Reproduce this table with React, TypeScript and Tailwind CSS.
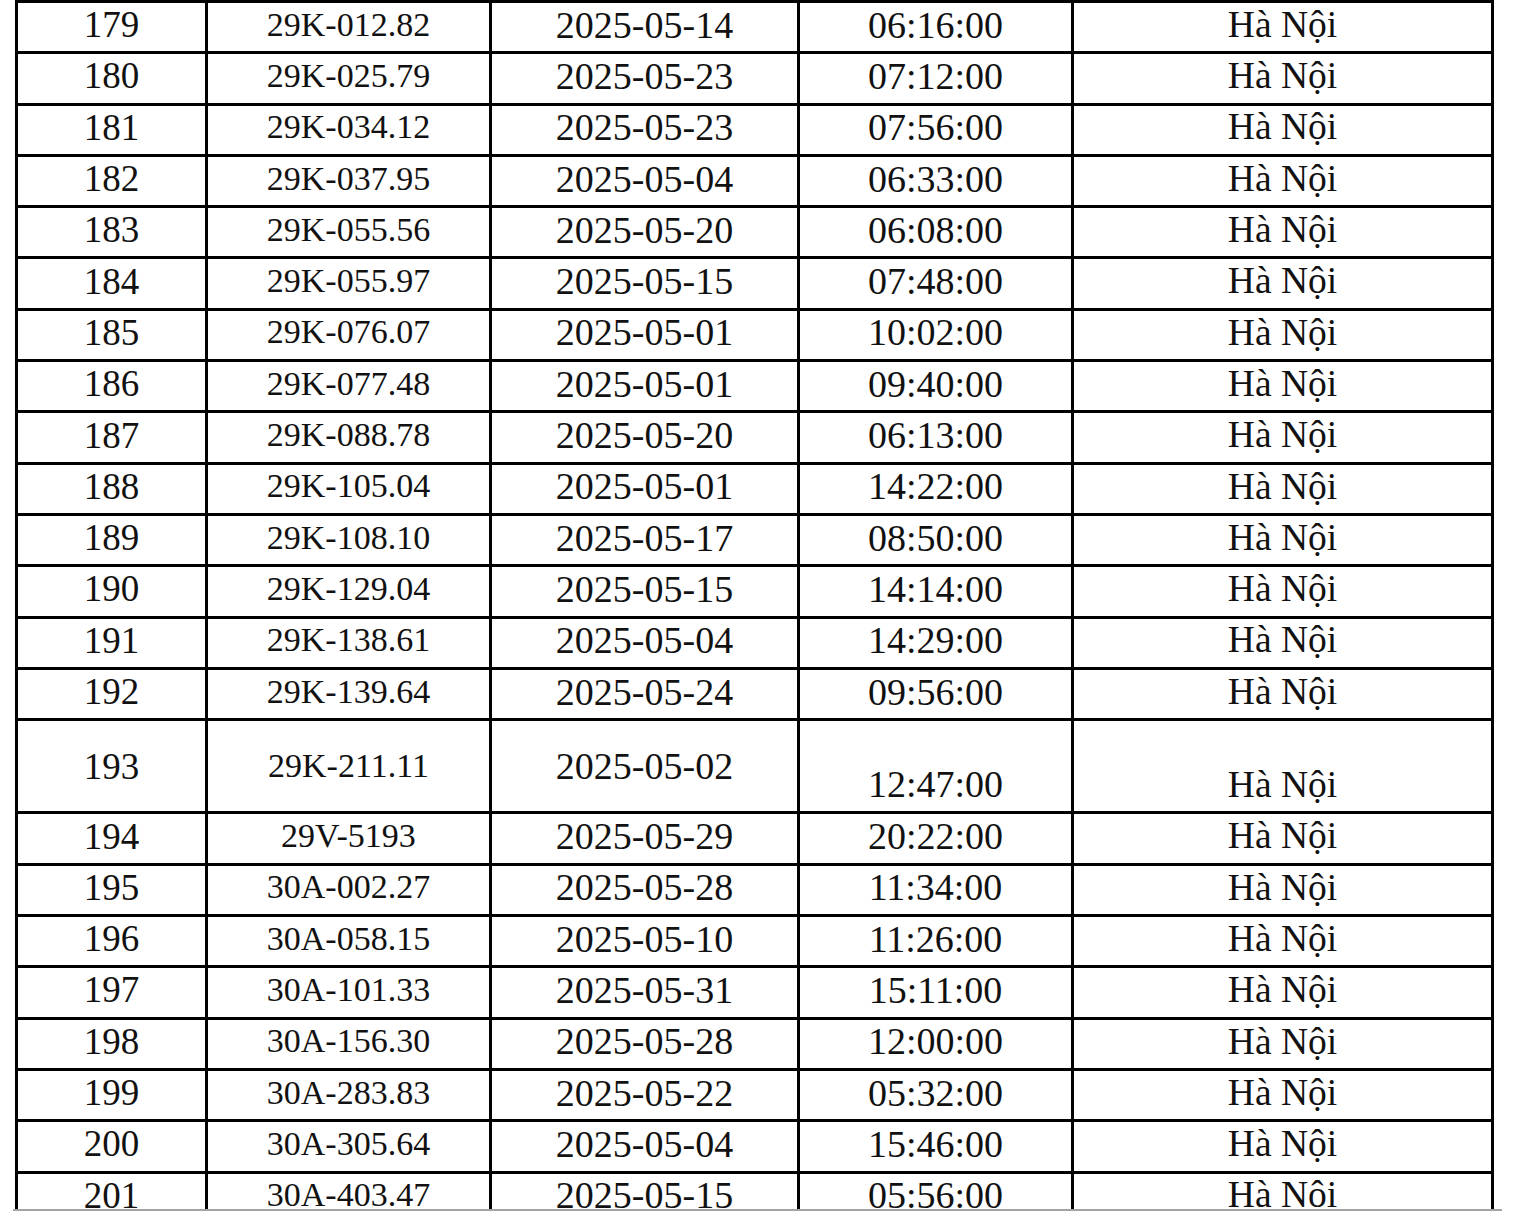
type Row = {
  stt: string;
  plate: string;
  date: string;
  time: string;
  place: string;
  tall?: boolean;
};

const rows: Row[] = [
  { stt: "179", plate: "29K-012.82", date: "2025-05-14", time: "06:16:00", place: "Hà Nội" },
  { stt: "180", plate: "29K-025.79", date: "2025-05-23", time: "07:12:00", place: "Hà Nội" },
  { stt: "181", plate: "29K-034.12", date: "2025-05-23", time: "07:56:00", place: "Hà Nội" },
  { stt: "182", plate: "29K-037.95", date: "2025-05-04", time: "06:33:00", place: "Hà Nội" },
  { stt: "183", plate: "29K-055.56", date: "2025-05-20", time: "06:08:00", place: "Hà Nội" },
  { stt: "184", plate: "29K-055.97", date: "2025-05-15", time: "07:48:00", place: "Hà Nội" },
  { stt: "185", plate: "29K-076.07", date: "2025-05-01", time: "10:02:00", place: "Hà Nội" },
  { stt: "186", plate: "29K-077.48", date: "2025-05-01", time: "09:40:00", place: "Hà Nội" },
  { stt: "187", plate: "29K-088.78", date: "2025-05-20", time: "06:13:00", place: "Hà Nội" },
  { stt: "188", plate: "29K-105.04", date: "2025-05-01", time: "14:22:00", place: "Hà Nội" },
  { stt: "189", plate: "29K-108.10", date: "2025-05-17", time: "08:50:00", place: "Hà Nội" },
  { stt: "190", plate: "29K-129.04", date: "2025-05-15", time: "14:14:00", place: "Hà Nội" },
  { stt: "191", plate: "29K-138.61", date: "2025-05-04", time: "14:29:00", place: "Hà Nội" },
  { stt: "192", plate: "29K-139.64", date: "2025-05-24", time: "09:56:00", place: "Hà Nội" },
  { stt: "193", plate: "29K-211.11", date: "2025-05-02", time: "12:47:00", place: "Hà Nội", tall: true },
  { stt: "194", plate: "29V-5193", date: "2025-05-29", time: "20:22:00", place: "Hà Nội" },
  { stt: "195", plate: "30A-002.27", date: "2025-05-28", time: "11:34:00", place: "Hà Nội" },
  { stt: "196", plate: "30A-058.15", date: "2025-05-10", time: "11:26:00", place: "Hà Nội" },
  { stt: "197", plate: "30A-101.33", date: "2025-05-31", time: "15:11:00", place: "Hà Nội" },
  { stt: "198", plate: "30A-156.30", date: "2025-05-28", time: "12:00:00", place: "Hà Nội" },
  { stt: "199", plate: "30A-283.83", date: "2025-05-22", time: "05:32:00", place: "Hà Nội" },
  { stt: "200", plate: "30A-305.64", date: "2025-05-04", time: "15:46:00", place: "Hà Nội" },
  { stt: "201", plate: "30A-403.47", date: "2025-05-15", time: "05:56:00", place: "Hà Nội" },
];

function TableRow({ row }: { row: Row }) {
  // tall row: first three columns centred, last two sit at the bottom
  const mid = row.tall ? "items-center pb-0" : "items-center pb-[5px]";
  const low = row.tall ? "items-end pb-[8px]" : "items-center pb-[5px]";

  return (
    <div
      className={`grid grid-cols-[190px_284px_308px_274px_1fr] border-b-[3px] border-black ${
        row.tall ? "h-[93.3px]" : "h-[51.3px]"
      }`}
    >
      <div className={`flex justify-center border-r-[3px] border-black text-[37px] leading-none ${mid}`}>
        {row.stt}
      </div>
      <div className={`flex justify-center border-r-[3px] border-black text-[34px] leading-none ${mid}`}>
        {row.plate}
      </div>
      <div className={`flex justify-center border-r-[3px] border-black text-[38px] leading-none ${mid}`}>
        {row.date}
      </div>
      <div className={`flex justify-center border-r-[3px] border-black text-[38px] leading-none ${low}`}>
        {row.time}
      </div>
      <div className={`flex justify-center text-[37.5px] leading-none ${low}`}>{row.place}</div>
    </div>
  );
}

export default function App() {
  return (
    <div className="w-[1513px] h-[1223px] bg-white overflow-hidden">
      {/* scanned sheet, cut off at the bottom */}
      <div className="ml-[13px] w-[1489px] h-[1211px] overflow-hidden border-b-2 border-[#a3a3a3]">
        <div className="ml-[2px] w-[1479px] border-x-[3px] border-t-[3px] border-black text-[#111] font-['Liberation_Serif','Times_New_Roman',serif]">
          {rows.map((r) => (
            <TableRow key={r.stt} row={r} />
          ))}
        </div>
      </div>
    </div>
  );
}
